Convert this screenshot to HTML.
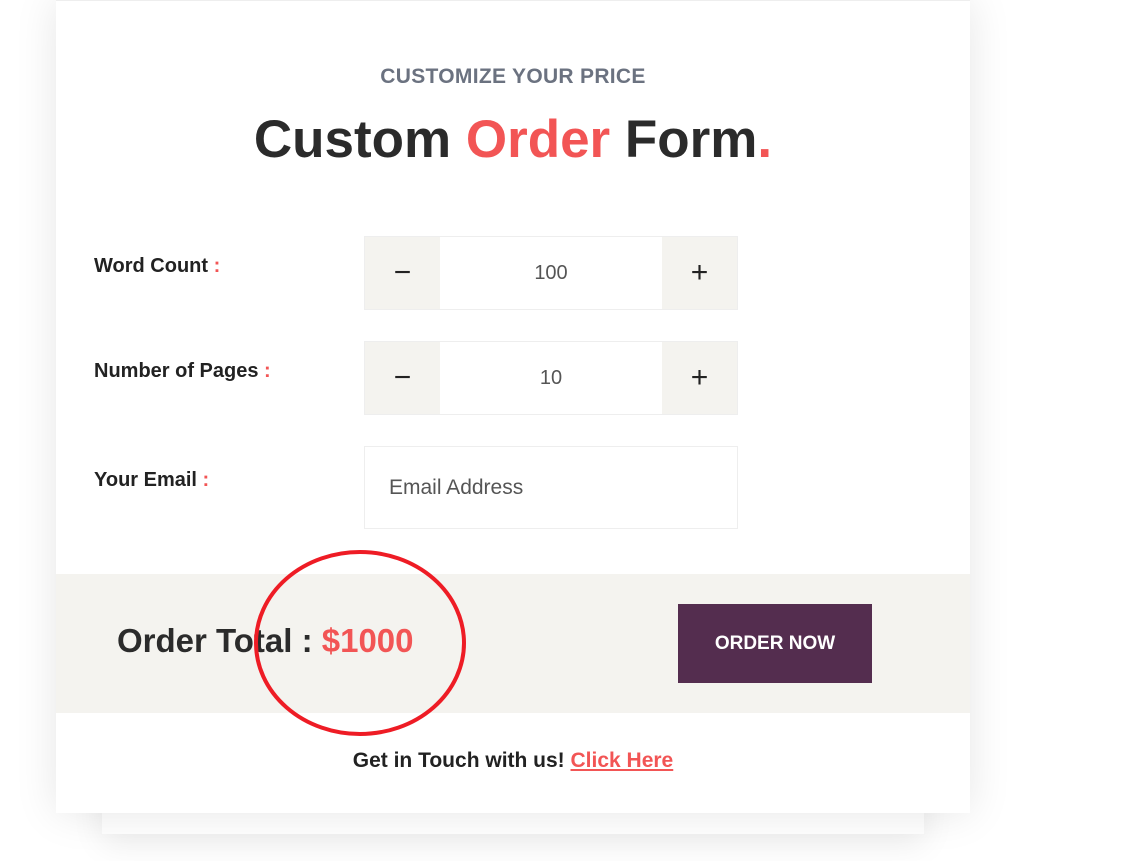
<!DOCTYPE html>
<html><head><style>
body{margin:0;width:1145px;height:861px;background:#fff;position:relative;overflow:hidden;font-family:"Liberation Sans",sans-serif}
.back{position:absolute;left:102px;top:700px;width:822px;height:134px;background:#fff;box-shadow:0 10px 30px rgba(0,0,0,.08)}
.card{position:absolute;left:56px;top:0;width:914px;height:812px;background:#fff;box-shadow:0 0 40px rgba(0,0,0,.1);border-top:1px solid #eee}
.sub{position:absolute;top:64px;left:0;width:100%;text-align:center;color:#6b7280;font-size:21px;font-weight:bold;letter-spacing:.3px}
h1{position:absolute;top:108px;left:0;width:100%;text-align:center;margin:0;font-size:53px;font-weight:bold;color:#2b2b2b}
.r{color:#f25555}
.lbl{position:absolute;left:38px;font-size:20px;font-weight:bold;color:#222}
.box{position:absolute;left:308px;width:374px;height:74px;background:#fff;border:1px solid #eee;box-sizing:border-box}
.btn{position:absolute;top:0;width:75px;height:100%;background:#f4f3ef;font-size:30px;color:#222;text-align:center;line-height:72px}
.val{position:absolute;left:75px;right:75px;top:0;text-align:center;line-height:72px;font-size:20px;color:#555}
.bar{position:absolute;left:0;top:573px;width:914px;height:139px;background:#f4f3ef}
.tot{position:absolute;left:61px;top:48px;font-size:33px;font-weight:bold;color:#2b2b2b}
.ord{position:absolute;left:622px;top:30px;width:194px;height:79px;background:#542d4f;color:#fff;font-weight:bold;font-size:19px;text-align:center;line-height:79px}
.git{position:absolute;top:748px;left:0;width:100%;text-align:center;font-size:21px;font-weight:bold;color:#222}
.git a{color:#f25555;text-decoration:underline}
</style></head><body>
<div class="back"></div>
<div class="card">
<div class="sub">CUSTOMIZE YOUR PRICE</div>
<h1>Custom <span class="r">Order</span> Form<span class="r">.</span></h1>
<div class="lbl" style="top:254px">Word Count <span class="r">:</span></div>
<div class="box" style="top:235px"><div class="btn" style="left:0">−</div><div class="val">100</div><div class="btn" style="right:0">+</div></div>
<div class="lbl" style="top:359px">Number of Pages <span class="r">:</span></div>
<div class="box" style="top:340px"><div class="btn" style="left:0">−</div><div class="val">10</div><div class="btn" style="right:0">+</div></div>
<div class="lbl" style="top:468px">Your Email <span class="r">:</span></div>
<div class="box" style="top:445px;height:83px"><div style="position:absolute;left:24px;top:0;line-height:81px;font-size:21px;color:#555">Email Address</div></div>
<div class="bar">
<div class="tot">Order Total : <span class="r">$1000</span></div>
<div class="ord">ORDER NOW</div>
</div>
<div class="git">Get in Touch with us! <a>Click Here</a></div>
</div>
<svg style="position:absolute;left:0;top:0" width="1145" height="861"><ellipse cx="360" cy="643" rx="104" ry="91" fill="none" stroke="#ee1c25" stroke-width="4"/></svg>
</body></html>
